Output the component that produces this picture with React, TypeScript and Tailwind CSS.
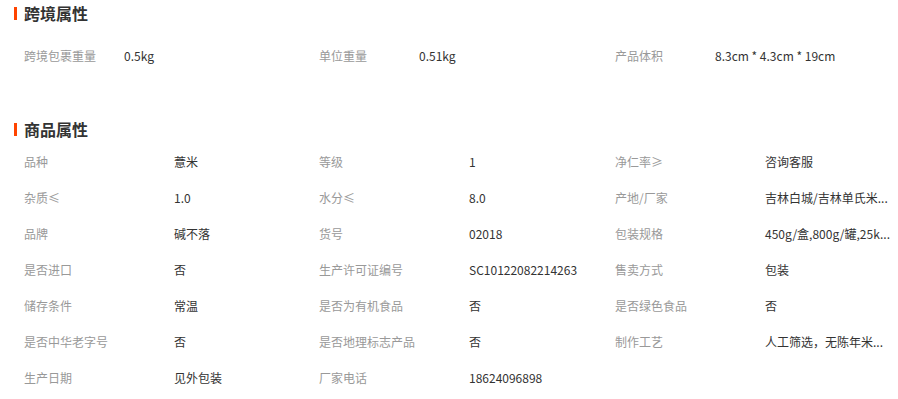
const font = { fontFamily: '"Noto Sans CJK SC", "Noto Sans", sans-serif' };

type Attr = { label: string; value: string };

const crossBorder: Attr[] = [
  { label: "跨境包裹重量", value: "0.5kg" },
  { label: "单位重量", value: "0.51kg" },
  { label: "产品体积", value: "8.3cm * 4.3cm * 19cm" },
];

const product: Attr[] = [
  { label: "品种", value: "薏米" },
  { label: "等级", value: "1" },
  { label: "净仁率≥", value: "咨询客服" },
  { label: "杂质≤", value: "1.0" },
  { label: "水分≤", value: "8.0" },
  { label: "产地/厂家", value: "吉林白城/吉林单氏米..." },
  { label: "品牌", value: "碱不落" },
  { label: "货号", value: "02018" },
  { label: "包装规格", value: "450g/盒,800g/罐,25k..." },
  { label: "是否进口", value: "否" },
  { label: "生产许可证编号", value: "SC10122082214263" },
  { label: "售卖方式", value: "包装" },
  { label: "储存条件", value: "常温" },
  { label: "是否为有机食品", value: "否" },
  { label: "是否绿色食品", value: "否" },
  { label: "是否中华老字号", value: "否" },
  { label: "是否地理标志产品", value: "否" },
  { label: "制作工艺", value: "人工筛选，无陈年米..." },
  { label: "生产日期", value: "见外包装" },
  { label: "厂家电话", value: "18624096898" },
];

function SectionTitle({ title }: { title: string }) {
  return (
    <div className="flex h-[26px] items-center">
      <span className="ml-[14px] h-[13px] w-[3px] bg-[#ff4400]" />
      <span className="ml-[7px] text-[16px] font-bold leading-none text-[#333]">{title}</span>
    </div>
  );
}

function AttrGrid({ items, labelWidth }: { items: Attr[]; labelWidth: string }) {
  return (
    <div className="grid grid-cols-[295px_296px_283px] pl-[24px]">
      {items.map((it) => (
        <div key={it.label} className="flex h-[36px] items-center text-[12px]">
          <span className={`${labelWidth} shrink-0 text-[#999]`}>{it.label}</span>
          <span className="whitespace-nowrap text-[#333]">{it.value}</span>
        </div>
      ))}
    </div>
  );
}

export default function App() {
  return (
    <div className="h-[399px] w-[898px] overflow-hidden bg-white" style={font}>
      <SectionTitle title="跨境属性" />
      <div className="mt-[12px]">
        <AttrGrid items={crossBorder} labelWidth="w-[100px]" />
      </div>
      <div className="mt-[42px]">
        <SectionTitle title="商品属性" />
      </div>
      <div className="mt-[2px]">
        <AttrGrid items={product} labelWidth="w-[150px]" />
      </div>
    </div>
  );
}
